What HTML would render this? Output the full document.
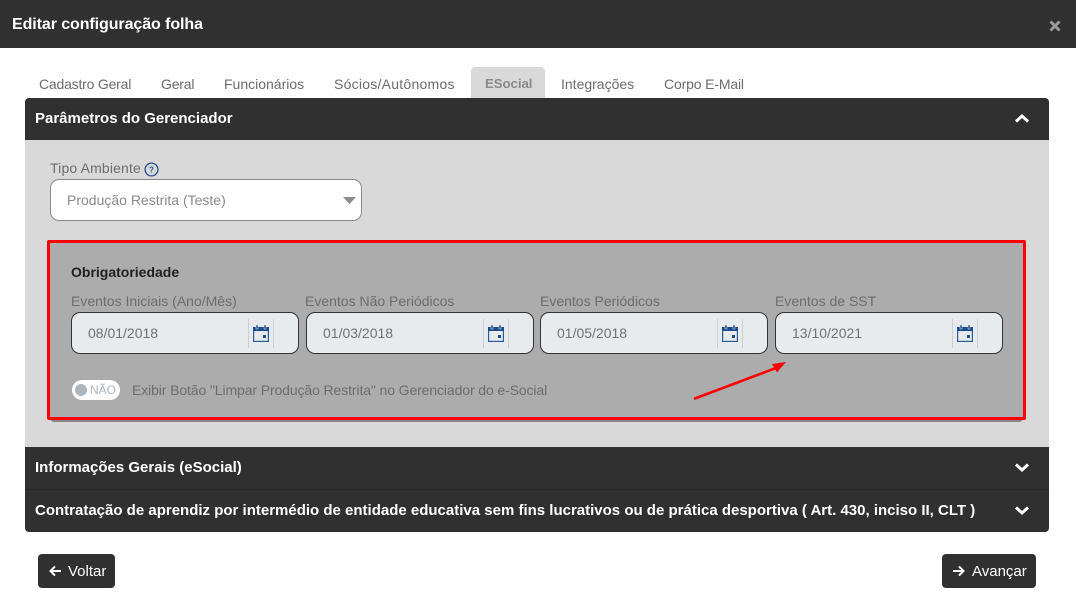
<!DOCTYPE html>
<html lang="pt-BR">
<head>
<meta charset="utf-8">
<title>Editar configuração folha</title>
<style>
html,body{margin:0;padding:0;background:#fff;}
body{width:1076px;height:598px;position:relative;overflow:hidden;font-family:"Liberation Sans",Arial,sans-serif;}
.a{position:absolute;}
.t{position:absolute;white-space:nowrap;line-height:18px;}
.tab{font-size:14px;color:#6c6c6c;top:75px;}
.h{font-size:15px;font-weight:700;color:#fff;}
.lbl{font-size:14px;color:#6d6d6d;top:292px;}
.inp{position:absolute;top:312px;width:226px;height:40px;background:#e8ebee;border:1px solid #333;border-radius:9px;}
.inp span{position:absolute;left:16px;top:11px;font-size:14px;line-height:18px;color:#6f7274;white-space:nowrap;}
.inp i{position:absolute;top:6px;width:1px;height:29px;background:#cdd0d3;}
.inp svg{position:absolute;left:181px;top:12px;}
</style>
</head>
<body>
<div class="a" style="left:0;top:0;width:1076px;height:48px;background:#303030;"></div>
<div class="t" style="left:12px;top:16px;font-size:16px;font-weight:700;color:#fff;letter-spacing:-.08px;">Editar configuração folha</div>
<svg class="a" style="left:1048px;top:19px;" width="14" height="14" viewBox="0 0 14 14"><path d="M2.5 2.5L11.5 11.5M11.5 2.5L2.5 11.5" stroke="#9a9a9a" stroke-width="3"/></svg>

<div class="a" style="left:471px;top:67px;width:74px;height:31px;background:#d9d9d9;border-radius:4px 4px 0 0;"></div>
<div class="t tab" style="left:39px;letter-spacing:-.2px;">Cadastro Geral</div>
<div class="t tab" style="left:161px;letter-spacing:-.2px;">Geral</div>
<div class="t tab" style="left:224px;">Funcionários</div>
<div class="t tab" style="left:334px;letter-spacing:.25px;">Sócios/Autônomos</div>
<div class="t tab" style="left:485px;font-weight:700;color:#8a8a8a;font-size:13.3px;letter-spacing:-.1px;">ESocial</div>
<div class="t tab" style="left:561px;">Integrações</div>
<div class="t tab" style="left:664px;letter-spacing:-.15px;">Corpo E-Mail</div>

<div class="a" style="left:25px;top:98px;width:1024px;height:42px;background:#303030;border-radius:4px 4px 0 0;"></div>
<div class="t h" style="left:35px;top:110px;">Parâmetros do Gerenciador</div>
<svg class="a" style="left:1014px;top:113px;" width="16" height="11" viewBox="0 0 16 11"><path d="M2 8.5L8 3L14 8.5" fill="none" stroke="#fff" stroke-width="3"/></svg>

<div class="a" style="left:25px;top:140px;width:1024px;height:307px;background:#d9d9d9;"></div>
<div class="t" style="left:50px;top:159px;font-size:14px;color:#6d6d6d;letter-spacing:.15px;">Tipo Ambiente</div>
<svg class="a" style="left:144px;top:162px;" width="15" height="15" viewBox="0 0 15 15"><circle cx="7.5" cy="7.5" r="6.4" fill="none" stroke="#1f4e8c" stroke-width="1.3"/><text x="7.5" y="10.5" text-anchor="middle" font-size="8" font-weight="700" font-family="Liberation Sans" fill="#1f4e8c">?</text></svg>
<div class="a" style="left:50px;top:179px;width:310px;height:40px;background:#fff;border:1px solid #8a8a8a;border-radius:9px;"></div>
<div class="t" style="left:67px;top:191px;font-size:14px;color:#8a8a8a;">Produção Restrita (Teste)</div>
<svg class="a" style="left:343px;top:197px;" width="13" height="7" viewBox="0 0 13 7"><path d="M0 0H13L6.5 7Z" fill="#8c8c8c"/></svg>

<div class="a" style="left:50px;top:243px;width:973px;height:179px;background:#888;border-radius:0 0 4px 4px;"></div>
<div class="a" style="left:47px;top:240px;width:973px;height:174px;background:#acacac;border:3px solid #fe0000;border-radius:2px;"></div>

<div class="t" style="left:71px;top:263px;font-size:14px;font-weight:700;color:#1f1f1f;">Obrigatoriedade</div>

<div class="t lbl" style="left:71px;">Eventos Iniciais (Ano/Mês)</div>
<div class="t lbl" style="left:305px;">Eventos Não Periódicos</div>
<div class="t lbl" style="left:540px;">Eventos Periódicos</div>
<div class="t lbl" style="left:775px;">Eventos de SST</div>

<div class="inp" style="left:71px;"><span>08/01/2018</span><i style="left:176px"></i><i style="left:201px"></i>
<svg width="16" height="17" viewBox="0 0 16 17"><rect x=".6" y="2.6" width="14.8" height="13.8" fill="none" stroke="#2a5c9a" stroke-width="1.2"/><rect x="0" y="2" width="16" height="4" fill="#1b4a8a"/><rect x="3" y="0" width="2" height="4" fill="#1b4a8a" stroke="#e8ebee" stroke-width=".5"/><rect x="11" y="0" width="2" height="4" fill="#1b4a8a" stroke="#e8ebee" stroke-width=".5"/><rect x="10" y="10" width="3" height="3" fill="#1b4a8a"/></svg></div>
<div class="inp" style="left:306px;"><span>01/03/2018</span><i style="left:176px"></i><i style="left:201px"></i>
<svg width="16" height="17" viewBox="0 0 16 17"><rect x=".6" y="2.6" width="14.8" height="13.8" fill="none" stroke="#2a5c9a" stroke-width="1.2"/><rect x="0" y="2" width="16" height="4" fill="#1b4a8a"/><rect x="3" y="0" width="2" height="4" fill="#1b4a8a" stroke="#e8ebee" stroke-width=".5"/><rect x="11" y="0" width="2" height="4" fill="#1b4a8a" stroke="#e8ebee" stroke-width=".5"/><rect x="10" y="10" width="3" height="3" fill="#1b4a8a"/></svg></div>
<div class="inp" style="left:540px;"><span>01/05/2018</span><i style="left:176px"></i><i style="left:201px"></i>
<svg width="16" height="17" viewBox="0 0 16 17"><rect x=".6" y="2.6" width="14.8" height="13.8" fill="none" stroke="#2a5c9a" stroke-width="1.2"/><rect x="0" y="2" width="16" height="4" fill="#1b4a8a"/><rect x="3" y="0" width="2" height="4" fill="#1b4a8a" stroke="#e8ebee" stroke-width=".5"/><rect x="11" y="0" width="2" height="4" fill="#1b4a8a" stroke="#e8ebee" stroke-width=".5"/><rect x="10" y="10" width="3" height="3" fill="#1b4a8a"/></svg></div>
<div class="inp" style="left:775px;"><span>13/10/2021</span><i style="left:176px"></i><i style="left:201px"></i>
<svg width="16" height="17" viewBox="0 0 16 17"><rect x=".6" y="2.6" width="14.8" height="13.8" fill="none" stroke="#2a5c9a" stroke-width="1.2"/><rect x="0" y="2" width="16" height="4" fill="#1b4a8a"/><rect x="3" y="0" width="2" height="4" fill="#1b4a8a" stroke="#e8ebee" stroke-width=".5"/><rect x="11" y="0" width="2" height="4" fill="#1b4a8a" stroke="#e8ebee" stroke-width=".5"/><rect x="10" y="10" width="3" height="3" fill="#1b4a8a"/></svg></div>

<div class="a" style="left:72px;top:380px;width:48px;height:20px;background:#fff;border-radius:10px;"></div>
<div class="a" style="left:75px;top:384px;width:12px;height:12px;background:#adb5bd;border-radius:50%;"></div>
<div class="t" style="left:90px;top:381px;font-size:12px;color:#adb5bd;">NÃO</div>
<div class="t" style="left:132px;top:381px;font-size:14px;color:#6d6d6d;letter-spacing:-.11px;">Exibir Botão "Limpar Produção Restrita" no Gerenciador do e-Social</div>

<svg class="a" style="left:690px;top:360px;" width="100" height="42" viewBox="0 0 100 42"><path d="M5 38.5L86 8" stroke="#fe0000" stroke-width="2.6" stroke-linecap="round"/><path d="M96 2L82 4L87 12.5Z" fill="#fe0000"/></svg>

<div class="a" style="left:25px;top:447px;width:1024px;height:85px;background:#303030;border-radius:0 0 4px 4px;"></div>
<div class="a" style="left:25px;top:489px;width:1024px;height:1px;background:#282828;"></div>
<div class="t h" style="left:35px;top:459px;">Informações Gerais (eSocial)</div>
<div class="t h" style="left:35px;top:502px;">Contratação de aprendiz por intermédio de entidade educativa sem fins lucrativos ou de prática desportiva ( Art. 430, inciso II, CLT )</div>
<svg class="a" style="left:1014px;top:462px;" width="16" height="11" viewBox="0 0 16 11"><path d="M2 2.5L8 8L14 2.5" fill="none" stroke="#fff" stroke-width="3"/></svg>
<svg class="a" style="left:1014px;top:505px;" width="16" height="11" viewBox="0 0 16 11"><path d="M2 2.5L8 8L14 2.5" fill="none" stroke="#fff" stroke-width="3"/></svg>

<div class="a" style="left:38px;top:554px;width:77px;height:34px;background:#303030;border-radius:4px;"></div>
<svg class="a" style="left:48px;top:564px;" width="14" height="14" viewBox="0 0 14 14"><path d="M13 7H3M7 2.5L2.5 7L7 11.5" fill="none" stroke="#fff" stroke-width="2"/></svg>
<div class="t" style="left:68px;top:563px;font-size:15px;color:#fff;">Voltar</div>
<div class="a" style="left:942px;top:554px;width:94px;height:34px;background:#303030;border-radius:4px;"></div>
<svg class="a" style="left:952px;top:564px;" width="14" height="14" viewBox="0 0 14 14"><path d="M1 7H11M7 2.5L11.5 7L7 11.5" fill="none" stroke="#fff" stroke-width="2"/></svg>
<div class="t" style="left:972px;top:563px;font-size:15px;color:#fff;">Avançar</div>
</body>
</html>
